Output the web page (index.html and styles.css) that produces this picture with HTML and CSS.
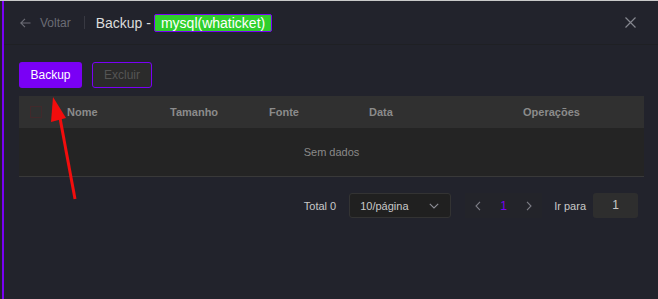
FILE: index.html
```html
<!DOCTYPE html>
<html lang="pt">
<head>
    <meta charset="UTF-8">
    <meta name="viewport" content="width=device-width, initial-scale=1.0">
    <title>Backup</title>
    <link rel="stylesheet" href="styles.css">
</head>
<body>
    <div class="drawer">
        <div class="drawer-header">
            <div class="back">
                <svg width="11" height="10" viewBox="0 0 11 10"><path d="M10.5 5H1M5 0.8L0.8 5 5 9.2" fill="none" stroke="#6c6d76" stroke-width="1.1"/></svg>
                <span>Voltar</span>
            </div>
            <div class="divider"></div>
            <div class="title">Backup - <span class="tag">mysql(whaticket)</span></div>
            <svg class="close" width="11" height="11" viewBox="0 0 11 11"><path d="M0.5 0.5L10.5 10.5M10.5 0.5L0.5 10.5" stroke="#85868f" stroke-width="1.2"/></svg>
        </div>

        <div class="drawer-body">
            <div class="actions">
                <button class="btn btn-primary">Backup</button>
                <button class="btn btn-disabled">Excluir</button>
            </div>

            <div class="table">
                <div class="table-head">
                    <div class="cell"><span class="checkbox"></span></div>
                    <div class="cell">Nome</div>
                    <div class="cell">Tamanho</div>
                    <div class="cell">Fonte</div>
                    <div class="cell">Data</div>
                    <div class="cell">Operações</div>
                </div>
                <div class="table-empty">Sem dados</div>
            </div>

            <div class="pagination">
                <span class="total">Total 0</span>
                <div class="select">
                    <span>10/página</span>
                    <svg width="10" height="6" viewBox="0 0 10 6"><path d="M0.8 0.8L5 5 9.2 0.8" fill="none" stroke="#8d8e96" stroke-width="1.1"/></svg>
                </div>
                <div class="pager">
                    <svg width="6" height="10" viewBox="0 0 6 10"><path d="M5 0.8L1 5 5 9.2" fill="none" stroke="#7d7e86" stroke-width="1.1"/></svg>
                    <span class="page-current">1</span>
                    <svg width="6" height="10" viewBox="0 0 6 10"><path d="M1 0.8L5 5 1 9.2" fill="none" stroke="#7d7e86" stroke-width="1.1"/></svg>
                </div>
                <span class="goto">Ir para</span>
                <div class="goto-input">1</div>
            </div>
        </div>
    </div>

    <!-- annotation arrow -->
    <svg class="annotation" width="658" height="299" viewBox="0 0 658 299">
        <line x1="75" y1="199" x2="60" y2="118" stroke="#f20d0d" stroke-width="3"/>
        <polygon points="53,97 51,122 66,118" fill="#f20d0d"/>
    </svg>
</body>
</html>
```

FILE: styles.css
```css
body {
    margin: 0;
    padding: 0;
    width: 658px;
    height: 299px;
    overflow: hidden;
    background: #22232c;
    font-family: "Liberation Sans", Arial, sans-serif;
    border-top: 1px solid #c9c9c9;
    box-sizing: border-box;
    padding-left: 2px;
}

.drawer {
    height: 100%;
    border-left: 2px solid #7a00f5;
    background: #22232c;
}

.drawer-header {
    display: flex;
    align-items: center;
    height: 43px;
    padding: 0 22px 0 16px;
    border-bottom: 1px solid #1f2024;
}

.back {
    display: flex;
    align-items: center;
    gap: 9px;
    color: #6b6c75;
    font-size: 12px;
}

.divider {
    width: 1px;
    height: 13px;
    background: #383942;
    margin: 0 11px 0 13px;
}

.title {
    color: #dcdcdc;
    font-size: 14px;
    display: flex;
    align-items: center;
    gap: 3px;
}

.tag {
    display: inline-block;
    background: #2fcf2c;
    color: #fff;
    border: 1px solid #7a00f5;
    border-radius: 2px;
    padding: 0 6px;
    line-height: 16px;
}

.close {
    margin-left: auto;
}

.drawer-body {
    padding: 17px 14px 0 15px;
}

.actions {
    display: flex;
    gap: 10px;
    margin-bottom: 8px;
}

.btn {
    height: 26px;
    border-radius: 3px;
    font-family: inherit;
    font-size: 12px;
    padding: 0;
    cursor: pointer;
}

.btn-primary {
    width: 63px;
    background: #7a00f5;
    border: none;
    color: #fff;
}

.btn-disabled {
    width: 60px;
    background: #2b2b2b;
    border: 1px solid #7a00f5;
    color: #555;
}

.table-head {
    display: grid;
    grid-template-columns: 48px 103px 99px 100px 154px 1fr;
    align-items: center;
    height: 32px;
    background: #303030;
    color: #8b8b8b;
    font-size: 11px;
    font-weight: bold;
}

.checkbox {
    display: block;
    width: 10px;
    height: 10px;
    margin-left: 11px;
    border: 1px solid #41292b;
}

.table-empty {
    height: 48px;
    line-height: 48px;
    background: #242424;
    color: #8a8a8a;
    font-size: 11px;
    text-align: center;
    border-bottom: 1px solid #393939;
}

.pagination {
    display: flex;
    align-items: center;
    justify-content: flex-end;
    margin-top: 16px;
    padding-right: 6px;
    font-size: 11px;
    color: #c8c8c8;
}

.total {
    margin-right: 13px;
}

.select {
    display: flex;
    align-items: center;
    justify-content: space-between;
    width: 102px;
    height: 25px;
    box-sizing: border-box;
    padding: 0 11px 0 10px;
    background: #202020;
    border: 1px solid #333;
    border-radius: 3px;
}

.pager {
    display: flex;
    align-items: center;
    justify-content: space-between;
    width: 77px;
    height: 25px;
    box-sizing: border-box;
    padding: 0 10px 0 10px;
    margin: 0 12px 0 14px;
    background: #23242a;
}

.page-current {
    color: #7a00f5;
    font-size: 12px;
}

.goto {
    margin-right: 7px;
}

.goto-input {
    width: 45px;
    height: 25px;
    line-height: 25px;
    text-align: center;
    background: #2e2e2e;
    border-radius: 3px;
    font-size: 12px;
}

.annotation {
    position: absolute;
    top: 0;
    left: 0;
    pointer-events: none;
}
```
